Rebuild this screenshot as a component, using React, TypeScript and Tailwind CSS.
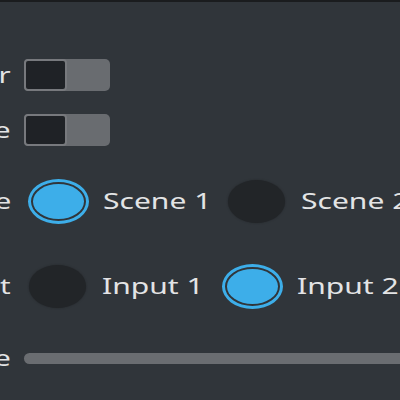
import React from 'react';

const font = "font-['Noto_Sans',_'DejaVu_Sans',_sans-serif]";

// label column: only the right end of each label fits in view
const Label = ({ text }: { text: string }) => (
  <div className="w-[11px] shrink-0 overflow-hidden flex justify-end">
    <span className="inline-block whitespace-nowrap text-[21px] leading-none text-[#e3e4e5] scale-x-[1.4] origin-right">
      {text}
    </span>
  </div>
);

const Switch = () => (
  <div className="w-[86px] h-[32px] rounded-[5px] bg-[#696c70] flex">
    <div className="w-[43px] h-full rounded-[4px] border-2 border-[#77797d] bg-[#1f2226]" />
  </div>
);

const Radio = ({ checked }: { checked?: boolean }) => (
  <div className="w-[61px] h-[45px] shrink-0 flex items-center justify-center">
    {checked ? (
      <div className="w-[61px] h-[45px] rounded-[50%] border-[3px] border-[#3daee9] p-[2px]">
        <div className="w-full h-full rounded-[50%] bg-[#3daee9]" />
      </div>
    ) : (
      <div className="w-[57px] h-[43px] rounded-[50%] bg-[#222528] shadow-[0_0_2px_#222528]" />
    )}
  </div>
);

const Option = ({ text, width }: { text: string; width: string }) => (
  <span className={`shrink-0 pt-[3px] ${width}`}>
    <span className="inline-block whitespace-nowrap text-[21px] leading-none text-[#e3e4e5] scale-x-[1.43] origin-left">
      {text}
    </span>
  </span>
);

export default function App() {
  return (
    <div className={`w-[400px] h-[400px] overflow-hidden bg-[#30353a] ${font} flex flex-col`}>
      <div className="h-[2px] bg-[#1a1c1e]" />

      <div className="mt-[57px] h-[32px] flex items-center gap-[13px]">
        <Label text="Mirror" />
        <Switch />
      </div>

      <div className="mt-[23px] h-[32px] flex items-center gap-[13px]">
        <Label text="Enable" />
        <Switch />
      </div>

      <div className="mt-[33px] h-[45px] flex items-center">
        <Label text="Scene" />
        <div className="ml-[17px] flex items-center">
          <Radio checked />
          <span className="w-[14px] shrink-0" />
          <Option text="Scene 1" width="w-[123px]" />
          <Radio />
          <span className="w-[14px] shrink-0" />
          <Option text="Scene 2" width="w-[110px]" />
        </div>
      </div>

      <div className="mt-[40px] h-[45px] flex items-center">
        <Label text="Input" />
        <div className="ml-[16px] flex items-center">
          <Radio />
          <span className="w-[14px] shrink-0" />
          <Option text="Input 1" width="w-[120px]" />
          <Radio checked />
          <span className="w-[14px] shrink-0" />
          <Option text="Input 2" width="w-[110px]" />
        </div>
      </div>

      <div className="mt-[44px] h-[11px] flex items-center gap-[13px]">
        <Label text="Volume" />
        <div className="flex-1 h-[11px] rounded-l-full bg-[#6a6d71] -mr-[20px]" />
      </div>
    </div>
  );
}
